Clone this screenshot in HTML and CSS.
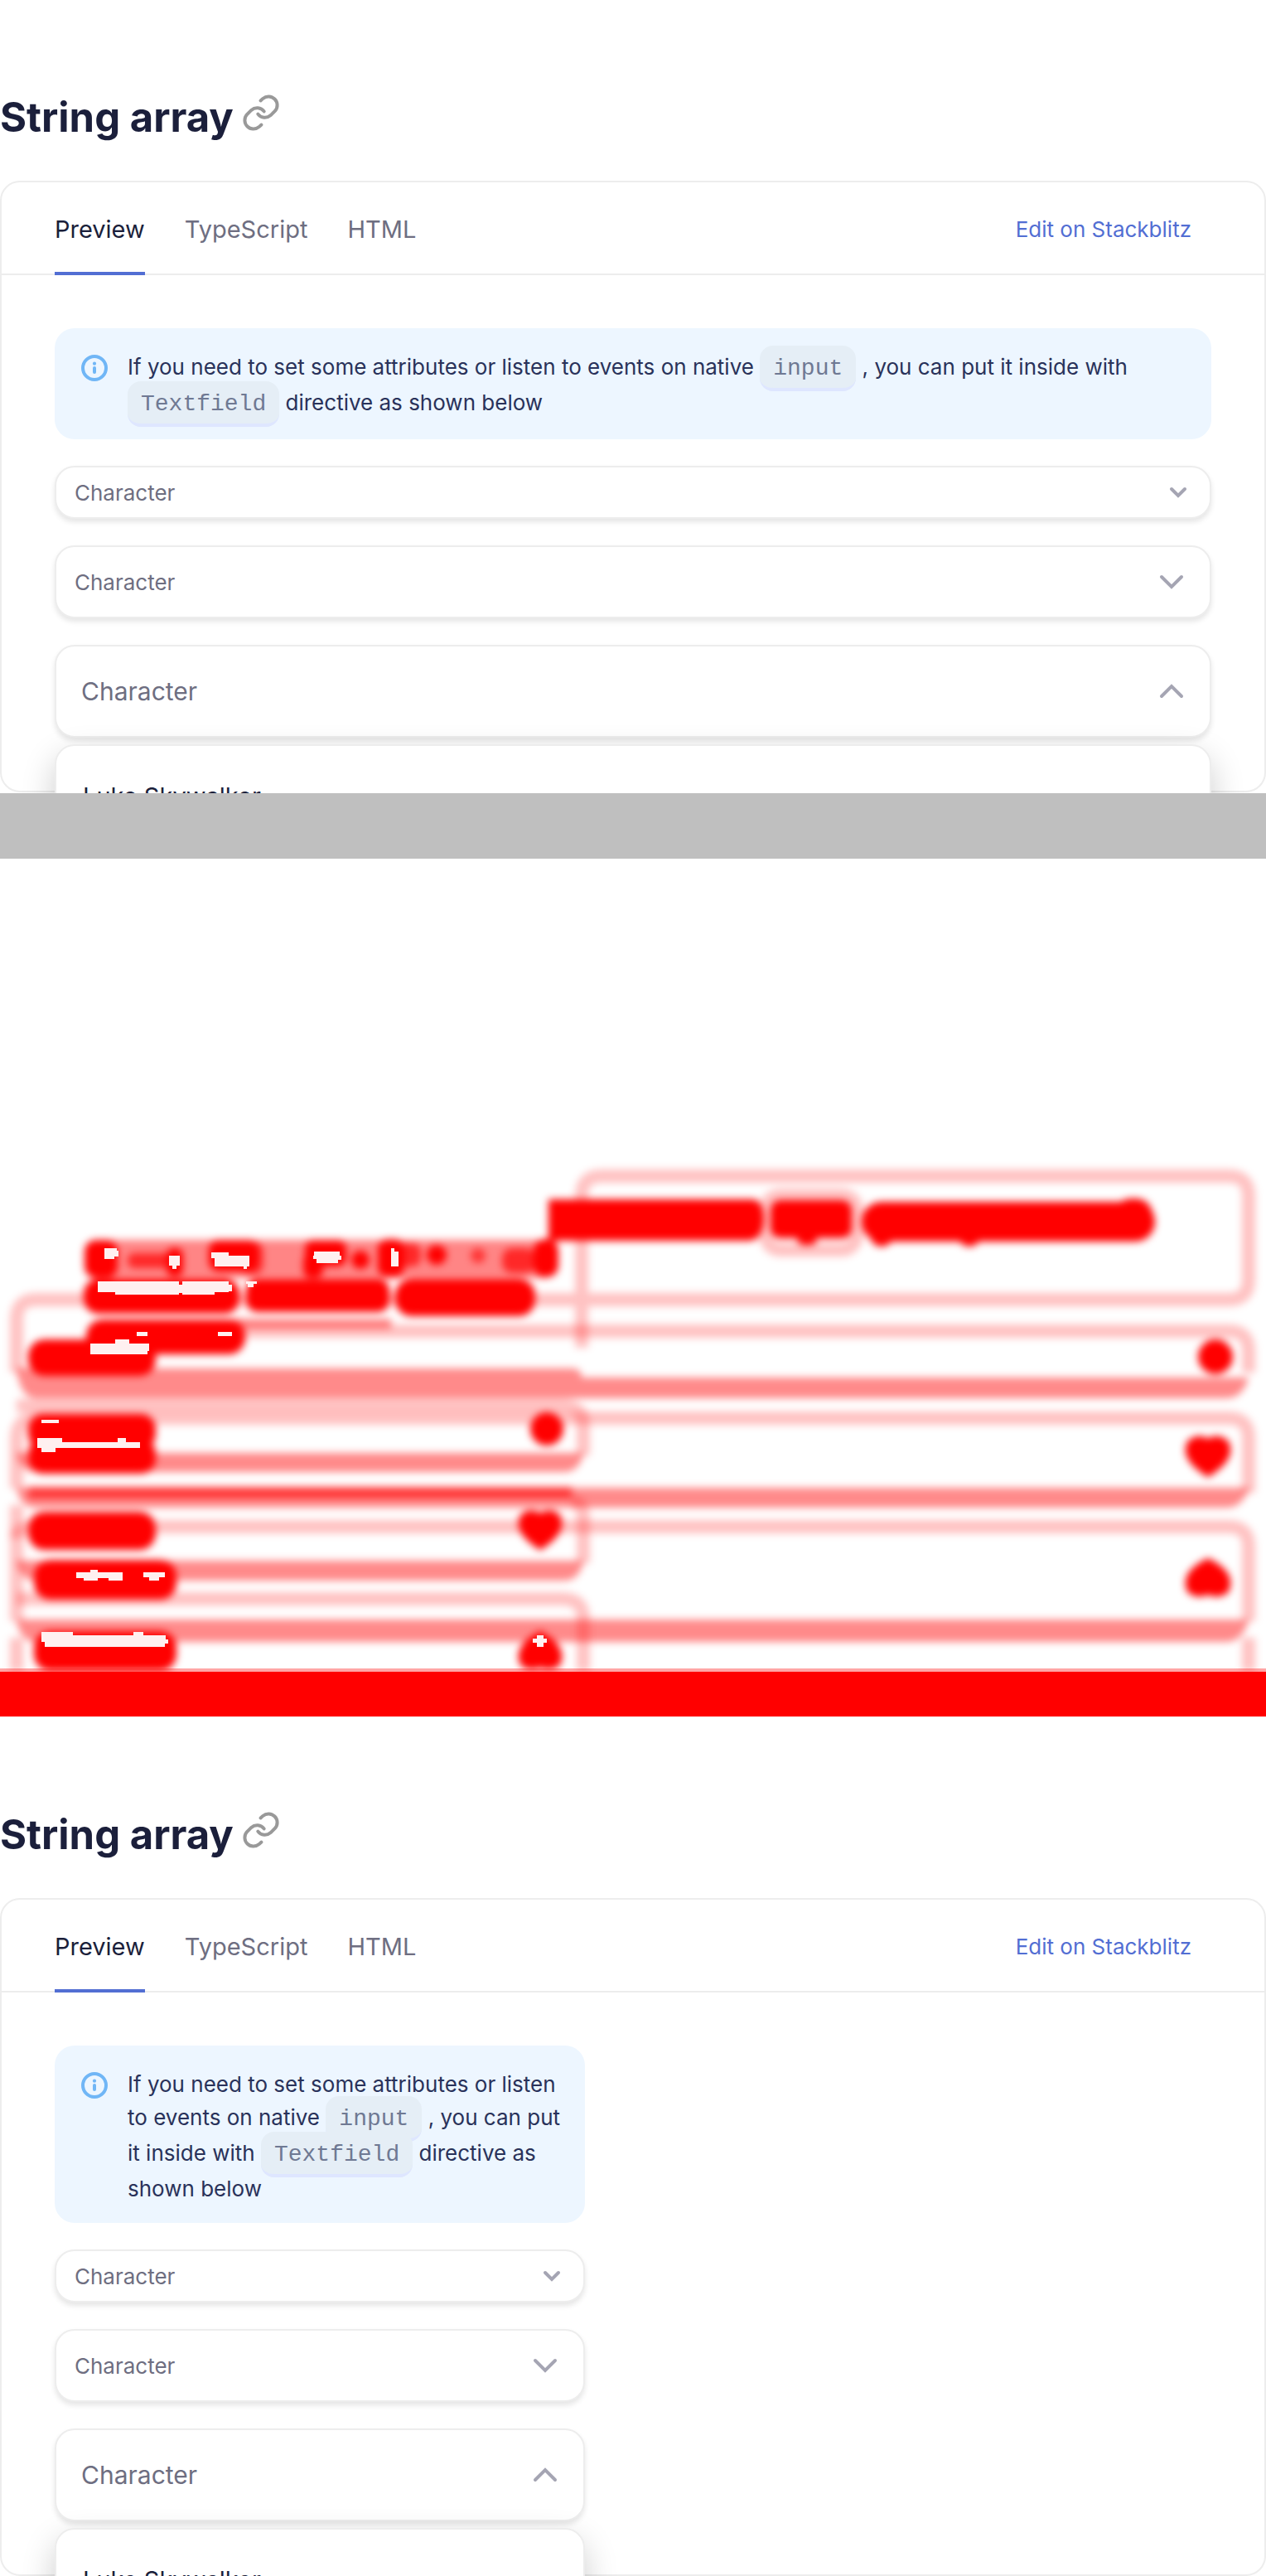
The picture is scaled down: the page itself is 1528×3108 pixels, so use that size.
FILE: index.html
```html
<!DOCTYPE html>
<html lang="en">
<head>
<meta charset="utf-8">
<meta name="viewport" content="width=device-width, initial-scale=1">
<title>String array</title>
<link rel="stylesheet" href="styles.css">
</head>
<body>
<svg class="sprite" aria-hidden="true">
  <symbol id="link" viewBox="0 0 48 48">
    <g fill="none" stroke="#999" stroke-width="4" stroke-linecap="round">
      <path d="M23.5 11.5L26.3 8.9A10.5 10.5 0 0 1 41.1 23.7L35.7 29.1A10.5 10.5 0 0 1 20.3 27.6"/>
      <path d="M24.5 40.5L21.7 43.1A10.5 10.5 0 0 1 6.9 28.3L12.3 22.9A10.5 10.5 0 0 1 27.7 24.4"/>
    </g>
  </symbol>
  <symbol id="info" viewBox="0 0 32 32">
    <circle cx="16" cy="16" r="14" fill="none" stroke="#70b6f6" stroke-width="4"/>
    <circle cx="16" cy="10.7" r="2.1" fill="#70b6f6"/>
    <path d="M16 16V21" stroke="#70b6f6" stroke-width="4" stroke-linecap="round"/>
  </symbol>
  <symbol id="chevron-s" viewBox="0 0 32 32">
    <path d="M8 12L16 20L24 12" fill="none" stroke="#a5a5b3" stroke-width="4" stroke-linecap="round"/>
  </symbol>
  <symbol id="chevron-l" viewBox="0 0 48 48">
    <path d="M12 18L24 30L36 18" fill="none" stroke="#a5a5b3" stroke-width="4" stroke-linecap="round"/>
  </symbol>
</svg>

<section class="frame">
  <header class="heading">
    <h2 class="title">String array</h2>
    <a class="anchor" href="#wide" aria-label="Link to String array"><svg class="icon-l"><use href="#link"/></svg></a>
  </header>
  <div class="panel" id="wide">
    <div class="bar">
      <nav class="tabs">
        <button class="tab tab-active" type="button">Preview</button>
        <button class="tab" type="button">TypeScript</button>
        <button class="tab" type="button">HTML</button>
      </nav>
      <a class="edit" href="#stackblitz">Edit on Stackblitz</a>
    </div>
    <div class="content">
      <div class="note">
        <svg class="icon-s"><use href="#info"/></svg>
        <p class="note-text">If you need to set some attributes or listen to events on native <code class="code">input</code> , you can put it inside with <code class="code">Textfield</code> directive as shown below</p>
      </div>
      <label class="field field-s"><input class="input" type="text" aria-label="Character" placeholder="Character"><svg class="icon-s"><use href="#chevron-s"/></svg></label>
      <label class="field field-m"><input class="input" type="text" aria-label="Character" placeholder="Character"><svg class="icon-l"><use href="#chevron-l"/></svg></label>
      <div class="combo">
        <label class="field field-l"><input class="input" type="text" aria-label="Character" placeholder="Character"><svg class="icon-l icon-up"><use href="#chevron-l"/></svg></label>
        <div class="dropdown"><button class="option" type="button">Luke Skywalker</button></div>
      </div>
    </div>
  </div>
</section>
<div class="filler"></div>

<svg class="diff" viewBox="0 0 1528 1036" role="img" aria-label="Difference between the two layouts">
  <defs>
    <filter id="soft" x="-5%" y="-5%" width="110%" height="110%"><feGaussianBlur stdDeviation="5"/></filter>
  </defs>
  <g filter="url(#soft)">
    <!-- outlines -->
    <g fill="none" stroke="#f00" stroke-opacity=".24" stroke-width="16">
      <path d="M702 590V407Q702 383 726 383H1483Q1507 383 1507 407V508Q1507 532 1483 532H44Q20 532 20 556V620"/>
      <path d="M190 570H1483Q1507 570 1507 594V620"/>
      <path d="M20 700Q20 675 44 675H1483Q1507 675 1507 699V765M20 700V760"/>
      <path d="M20 660H678Q704 660 704 684V720"/>
      <path d="M20 820Q20 806 44 806H1483Q1507 806 1507 830V920"/>
      <path d="M690 776Q704 776 704 796V850M20 780V920"/>
      <path d="M20 893H678Q704 893 704 917V980"/>
      <path d="M1507 940V980M20 940V980"/>
      <rect x="924" y="406" width="110" height="66" rx="18"/>
    </g>
    <!-- shadows under the fields -->
    <g fill="#f00" fill-opacity=".46">
      <path d="M20 615H690Q702 615 702 626H1507Q1500 651 1480 651H44Q24 651 20 615Z"/>
      <path d="M20 717H704Q700 740 680 740H44Q24 740 20 717Z"/>
      <path d="M20 759H1507Q1500 783 1480 783H44Q24 783 20 759Z"/>
      <path d="M20 847H704Q700 871 680 871H44Q24 871 20 847Z"/>
      <path d="M20 918H1507Q1500 945 1480 945H44Q24 945 20 918Z"/>
      <rect x="280" y="555" width="192" height="12"/>
      <rect x="34" y="758" width="656" height="14" fill-opacity=".6"/>
    </g>
    <!-- text of the wide layout -->
    <g fill="#f00">
      <path d="M662 411H910Q922 414 922 436Q920 460 904 461H662Z"/>
      <rect x="930" y="412" width="98" height="46" rx="12"/>
      <rect x="962" y="440" width="24" height="26" rx="8"/>
      <rect x="1040" y="414" width="354" height="48" rx="24"/>
      <rect x="1345" y="410" width="46" height="40" rx="20"/>
      <circle cx="1064" cy="454" r="14"/><circle cx="1170" cy="454" r="14"/>
    </g>
    <!-- text of the narrow layout -->
    <rect x="102" y="460" width="570" height="46" rx="18" fill="#f00" fill-opacity=".48"/>
    <g fill="#f00">
      <rect x="102" y="460" width="40" height="46" rx="14"/>
      <rect x="154" y="476" width="56" height="18" rx="8" fill-opacity=".7"/>
      <rect x="201" y="470" width="20" height="34" rx="8"/>
      <rect x="252" y="460" width="60" height="38" rx="12"/>
      <rect x="290" y="462" width="28" height="40" rx="12" fill-opacity=".6"/>
      <rect x="368" y="460" width="50" height="32" rx="10"/>
      <rect x="366" y="476" width="24" height="30" rx="9"/>
      <circle cx="435" cy="484" r="11"/>
      <rect x="456" y="459" width="32" height="46" rx="12"/>
      <rect x="480" y="464" width="28" height="28" rx="10" fill-opacity=".7"/>
      <circle cx="527" cy="478" r="12"/>
      <circle cx="577" cy="479" r="9" fill-opacity=".6"/>
      <rect x="606" y="470" width="40" height="30" rx="12" fill-opacity=".7"/>
      <rect x="644" y="459" width="30" height="46" rx="14"/>
      <rect x="101" y="507" width="188" height="42" rx="18"/>
      <rect x="297" y="507" width="173" height="40" rx="14"/>
      <rect x="477" y="507" width="169" height="45" rx="20"/>
      <rect x="104" y="556" width="192" height="42" rx="20"/>
      <rect x="34" y="580" width="154" height="44" rx="20"/>
      <rect x="34" y="670" width="154" height="42" rx="18"/>
      <rect x="34" y="700" width="154" height="42" rx="18"/>
      <rect x="34" y="788" width="154" height="46" rx="20"/>
      <rect x="41" y="846" width="172" height="48" rx="20"/>
      <rect x="41" y="932" width="172" height="48" rx="20"/>
    </g>
    <!-- chevrons -->
    <g fill="#f00" stroke="#f00" stroke-width="4">
      <circle cx="660" cy="688" r="18"/>
      <circle cx="1467" cy="601" r="19"/>
      <path d="M652 792Q664 784 674 793Q684 812 652 832Q620 812 630 793Q640 784 652 792Z"/>
      <path d="M1458 702Q1470 694 1481 704Q1491 724 1458 744Q1425 724 1435 704Q1446 694 1458 702Z"/>
      <path d="M652 974Q664 980 674 972Q684 952 652 934Q620 952 630 972Q640 980 652 974Z"/>
      <path d="M1458 886Q1470 892 1481 884Q1491 862 1458 846Q1425 862 1435 884Q1446 892 1458 886Z"/>
    </g>
  </g>
  <!-- areas the two layouts share -->
  <g fill="#fff0f0">
    <path d="M126 470H141V473H143V480H138V483H126Z"/>
    <path d="M204 479H217V491H213V495H208V491H204Z"/>
    <path d="M255 475H276V479H301V492H298V495H294V492H259V482H255Z"/>
    <path d="M379 474H410V479H412V484H408V488H382V483H378V479H379Z"/>
    <path d="M472 470H476V474H481V492H472Z"/>
    <path d="M118 510H216V514H220V510H276V514H280V522H276V523H259V526H220V524H216V526H139V523H118Z"/>
    <path d="M297 510H310V513H306V517H299V513H297Z"/>
    <rect x="165" y="571" width="13" height="5"/>
    <rect x="263" y="571" width="17" height="5"/>
    <path d="M109 585H139V580H156V585H180V594H178V598H109Z"/>
    <rect x="50" y="677" width="21" height="4"/>
    <path d="M45 699H75V704H142V699H152V704H169V711H67V716H50V711H45Z"/>
    <path d="M92 861H109V858H118V861H148V871H131V868H118V871H101V868H92Z"/>
    <path d="M173 861H199V867H192V871H180V867H173Z"/>
    <path d="M50 933H88V937H161V933H173V937H200V942H203V947H199V951H54V945H50Z"/>
    <path d="M648 937H656V941H660V946H656V951H648V946H643V941H648Z"/>
  </g>
  <rect y="981" width="1528" height="54" fill="#f00"/>
  <rect y="977" width="1528" height="4" fill="#f00" fill-opacity=".35"/>
</svg>

<section class="frame frame-last">
  <header class="heading">
    <h2 class="title">String array</h2>
    <a class="anchor" href="#narrow" aria-label="Link to String array"><svg class="icon-l"><use href="#link"/></svg></a>
  </header>
  <div class="panel" id="narrow">
    <div class="bar">
      <nav class="tabs">
        <button class="tab tab-active" type="button">Preview</button>
        <button class="tab" type="button">TypeScript</button>
        <button class="tab" type="button">HTML</button>
      </nav>
      <a class="edit" href="#stackblitz">Edit on Stackblitz</a>
    </div>
    <div class="content content-narrow">
      <div class="note">
        <svg class="icon-s"><use href="#info"/></svg>
        <p class="note-text">If you need to set some attributes or listen to events on native <code class="code">input</code> , you can put it inside with <code class="code">Textfield</code> directive as shown below</p>
      </div>
      <label class="field field-s"><input class="input" type="text" aria-label="Character" placeholder="Character"><svg class="icon-s"><use href="#chevron-s"/></svg></label>
      <label class="field field-m"><input class="input" type="text" aria-label="Character" placeholder="Character"><svg class="icon-l"><use href="#chevron-l"/></svg></label>
      <div class="combo">
        <label class="field field-l"><input class="input" type="text" aria-label="Character" placeholder="Character"><svg class="icon-l icon-up"><use href="#chevron-l"/></svg></label>
        <div class="dropdown"><button class="option" type="button">Luke Skywalker</button></div>
      </div>
    </div>
  </div>
</section>
</body>
</html>
```
FILE: styles.css
```css
* { box-sizing: border-box; }

body {
  margin: 0;
  background: #fff;
  color: #1b1f3b;
  font-family: Inter, "Liberation Sans", sans-serif;
  font-size: 26px;
}

button, input { font: inherit; color: inherit; }

.sprite { position: absolute; width: 0; height: 0; }
.icon-s { flex: none; width: 32px; height: 32px; }
.icon-l { flex: none; width: 48px; height: 48px; }
.icon-up { transform: rotate(180deg); }

.frame { padding: 110px 0 1px; overflow: hidden; }
.frame-last { padding-bottom: 0; }
.filler { height: 79px; background: #bfbfbf; }
.diff { display: block; width: 100%; }

.heading { display: flex; gap: 9px; margin-bottom: 44px; }
.title { margin: 0; font-size: 49px; line-height: 64px; font-weight: 700; }
.anchor { display: flex; }

.panel { border: 2px solid #ededed; border-radius: 24px; }
.bar {
  display: flex;
  justify-content: space-between;
  align-items: center;
  height: 112px;
  padding: 0 88px 0 64px;
  border-bottom: 2px solid #ededed;
}
.tabs { display: flex; align-self: stretch; gap: 48px; margin-bottom: -2px; }
.tab {
  padding: 4px 0 0;
  border: 0;
  border-bottom: 4px solid transparent;
  background: none;
  color: #6e6e81;
  font-size: 29px;
}
.tab-active { border-color: #526ed3; color: #1b1f3b; }
.edit { padding-top: 2px; color: #526ed3; text-decoration: none; }

.content { display: flex; flex-direction: column; gap: 32px; padding: 64px; }
.content-narrow { width: 768px; }

.note {
  display: flex;
  gap: 24px;
  padding: 24px 24px 24px 32px;
  border-radius: 24px;
  background: #edf6ff;
  color: #29325a;
}
.note .icon-s { margin-top: 8px; }
.note-text { margin: 0 0 -3px; padding-top: 3px; line-height: 40px; }
.code {
  padding: 12px 16px 8px;
  border-bottom: 4px solid #dee6ff;
  border-radius: 16px;
  background: #e5eef6;
  color: #6f7993;
  font-family: "Liberation Mono", monospace;
  font-size: 28px;
  line-height: 42px;
}

.field {
  display: flex;
  align-items: center;
  padding: 0 22px;
  border: 2px solid #ededed;
  border-radius: 24px;
  background: #fff;
  box-shadow: 0 4px 6px rgba(0, 0, 0, .1);
}
.field-s { height: 64px; }
.field-m { height: 88px; }
.field-l { height: 112px; padding-left: 30px; font-size: 30px; }
.input {
  flex: 1;
  min-width: 0;
  padding: 0;
  border: 0;
  outline: 0;
  background: none;
}
.input::placeholder { color: #6e6e81; opacity: 1; }

.combo { position: relative; }
.dropdown {
  position: absolute;
  top: 100%;
  left: 0;
  right: 0;
  margin-top: 8px;
  padding: 16px 8px;
  border: 2px solid #ededed;
  border-radius: 24px;
  background: #fff;
  box-shadow: 0 16px 40px rgba(0, 0, 0, .2);
}
.option {
  display: block;
  width: 100%;
  height: 88px;
  padding: 0 24px;
  border: 0;
  background: none;
  font-size: 29px;
  text-align: left;
}
```
